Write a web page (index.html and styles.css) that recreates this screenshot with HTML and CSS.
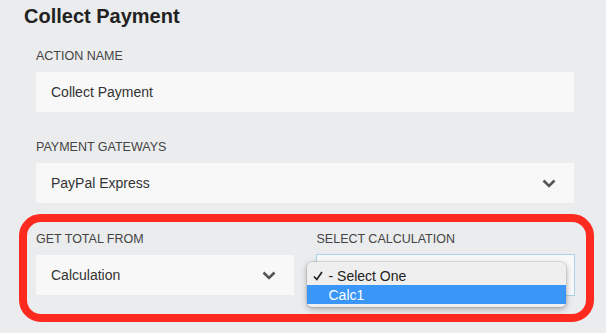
FILE: index.html
```html
<!DOCTYPE html>
<html>
<head>
<meta charset="utf-8">
<link rel="stylesheet" href="styles.css">
</head>
<body>
<div class="page">
  <h1 class="title">Collect Payment</h1>
  <div class="fields">
    <div class="field first">
      <label class="label">ACTION NAME</label>
      <div class="input">Collect Payment</div>
    </div>
    <div class="field second">
      <label class="label">PAYMENT GATEWAYS</label>
      <div class="select">
        <span>PayPal Express</span>
        <svg class="chev" width="14" height="9" viewBox="0 0 14 9"><polyline points="1.5,1.5 7,7 12.5,1.5" fill="none" stroke="#555" stroke-width="2.6" stroke-linecap="butt" stroke-linejoin="miter"/></svg>
      </div>
    </div>
  </div>
  <div class="highlight">
    <div class="field">
      <label class="label">GET TOTAL FROM</label>
      <div class="select">
        <span>Calculation</span>
        <svg class="chev" width="14" height="9" viewBox="0 0 14 9"><polyline points="1.5,1.5 7,7 12.5,1.5" fill="none" stroke="#555" stroke-width="2.6" stroke-linecap="butt" stroke-linejoin="miter"/></svg>
      </div>
    </div>
    <div class="field">
      <label class="label">SELECT CALCULATION</label>
      <div class="select focused">
        <div class="menu">
          <div class="option">
            <svg class="check" width="10" height="10" viewBox="0 0 10 10"><polyline points="1,5.5 3.8,8.5 9,1" fill="none" stroke="#222" stroke-width="1.7"/></svg>
            <span>- Select One</span>
          </div>
          <div class="option active"><span>Calc1</span></div>
        </div>
      </div>
    </div>
  </div>
</div>
</body>
</html>
```

FILE: styles.css
```css
html, body {
  margin: 0;
  padding: 0;
  background: #ebecee;
  font-family: "Liberation Sans", Arial, sans-serif;
}

.page {
  padding-top: 4px;
  width: 606px;
  height: 333px;
  box-sizing: border-box;
}

.title {
  margin: 0 0 0 24px;
  font-size: 20px;
  line-height: 24px;
  font-weight: 700;
  color: #222;
}

.fields {
  padding-left: 36px;
  width: 538px;
}

.field.first {
  margin-top: 20px;
}

.field.second {
  margin-top: 27px;
}

.label {
  display: block;
  font-size: 12.5px;
  line-height: 16px;
  color: #444;
  margin-bottom: 8px;
}

.input,
.select {
  position: relative;
  height: 40px;
  background: #f8f8f8;
  padding: 0 18px 0 15px;
  display: flex;
  align-items: center;
  justify-content: space-between;
  font-size: 14px;
  color: #333;
}

.chev {
  display: block;
}

.highlight {
  margin-top: 11px;
  margin-left: 19px;
  width: 575px;
  box-sizing: border-box;
  border: 8px solid #fc2a1f;
  border-radius: 22px;
  padding: 9px 12px 19px 9px;
  display: grid;
  grid-template-columns: 1fr 1fr;
  column-gap: 23px;
}

.select.focused {
  box-shadow: 0 0 0 1px #a9d3ea;
}

.menu {
  position: absolute;
  left: -10px;
  top: 7px;
  width: 259px;
  box-sizing: border-box;
  padding: 4px 0 3px;
  background: #efefef;
  border-radius: 5px;
  box-shadow: 0 2px 6px rgba(0, 0, 0, 0.3), 0 0 0 0.5px rgba(0, 0, 0, 0.15);
  z-index: 2;
}

.option {
  position: relative;
  height: 19px;
  display: flex;
  align-items: center;
  padding-left: 22px;
  font-size: 14px;
  color: #222;
}

.option.active {
  background: #3a96f7;
  color: #fff;
}

.check {
  position: absolute;
  left: 6px;
  top: 5px;
}
```
